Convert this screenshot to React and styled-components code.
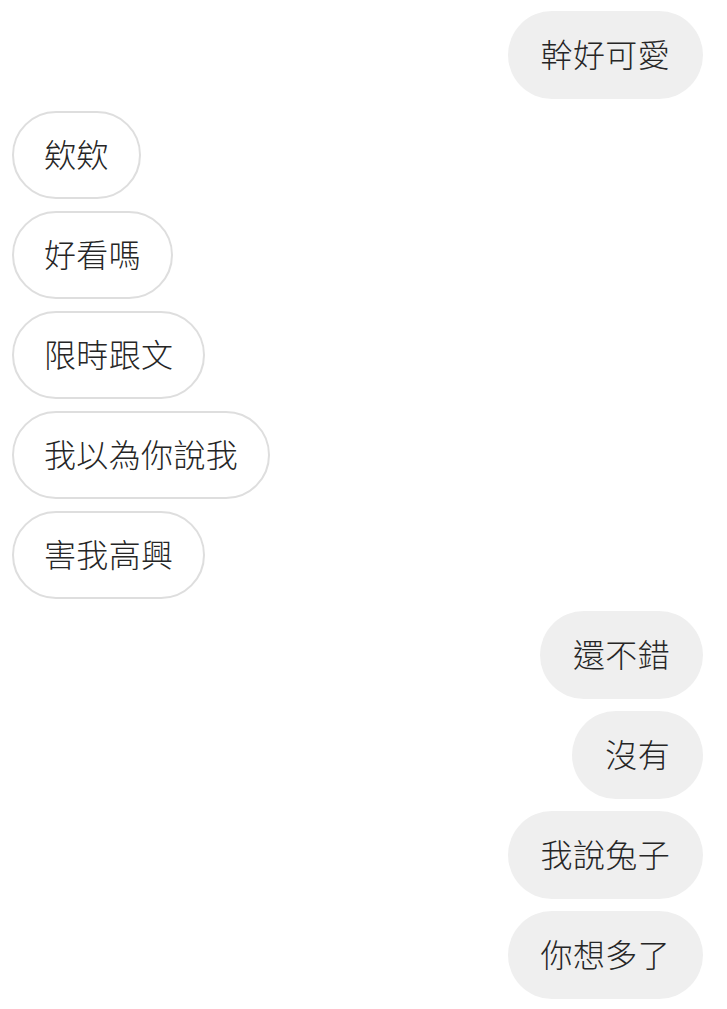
import React from "react";
import styled, { createGlobalStyle } from "styled-components";

const Global = createGlobalStyle`
  html, body { margin: 0; padding: 0; background: #ffffff; }
  body { font-family: "Noto Sans CJK TC", "Noto Sans", sans-serif; }
`;

const Thread = styled.div`
  display: flex;
  flex-direction: column;
  gap: 12px;
  padding: 11px 24px 11px 12px;
  width: 727px;
  box-sizing: border-box;
`;

const Row = styled.div`
  display: flex;
  justify-content: ${(p) => (p.$mine ? "flex-end" : "flex-start")};
`;

const Bubble = styled.div`
  box-sizing: border-box;
  height: 88px;
  display: flex;
  align-items: center;
  padding: 0 ${(p) => (p.$mine ? "33px" : "30px")} 5px;
  border-radius: 44px;
  background: ${(p) => (p.$mine ? "#efefef" : "#ffffff")};
  border: ${(p) => (p.$mine ? "none" : "2px solid #dedede")};
  color: #262626;
  font-size: 32px;
  font-weight: 300;
  letter-spacing: 0.35px;
  line-height: 1;
  white-space: nowrap;
`;

const messages = [
  { text: "幹好可愛", mine: true },
  { text: "欸欸", mine: false },
  { text: "好看嗎", mine: false },
  { text: "限時跟文", mine: false },
  { text: "我以為你說我", mine: false },
  { text: "害我高興", mine: false },
  { text: "還不錯", mine: true },
  { text: "沒有", mine: true },
  { text: "我說兔子", mine: true },
  { text: "你想多了", mine: true },
];

export default function App() {
  return (
    <>
      <Global />
      <Thread>
        {messages.map((m, i) => (
          <Row key={i} $mine={m.mine}>
            <Bubble $mine={m.mine}>{m.text}</Bubble>
          </Row>
        ))}
      </Thread>
    </>
  );
}
